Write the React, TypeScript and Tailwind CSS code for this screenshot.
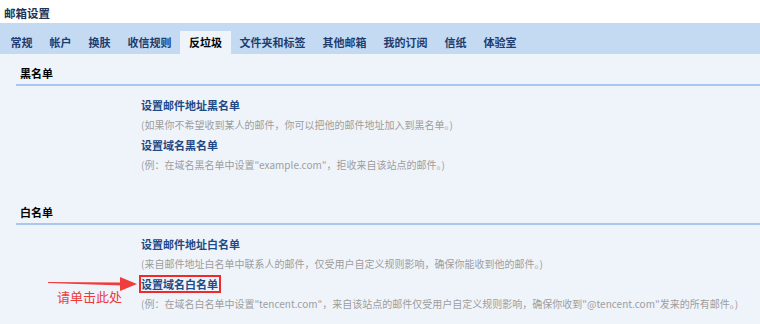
const font = { fontFamily: '"Microsoft YaHei", "Noto Sans CJK SC", "Liberation Sans", sans-serif' };

const tabs = ["常规", "帐户", "换肤", "收信规则", "反垃圾", "文件夹和标签", "其他邮箱", "我的订阅", "信纸", "体验室"];

type Item = { title: string; desc: string; marked?: boolean };

const blackList: Item[] = [
  { title: "设置邮件地址黑名单", desc: "(如果你不希望收到某人的邮件，你可以把他的邮件地址加入到黑名单。)" },
  { title: "设置域名黑名单", desc: "(例：在域名黑名单中设置\"example.com\"，拒收来自该站点的邮件。)" },
];

const whiteList: Item[] = [
  { title: "设置邮件地址白名单", desc: "(来自邮件地址白名单中联系人的邮件，仅受用户自定义规则影响，确保你能收到他的邮件。)" },
  {
    title: "设置域名白名单",
    desc: "(例：在域名白名单中设置\"tencent.com\"，来自该站点的邮件仅受用户自定义规则影响，确保你收到\"@tencent.com\"发来的所有邮件。)",
    marked: true,
  },
];

function Section({ name, items, className }: { name: string; items: Item[]; className: string }) {
  return (
    <section className={className}>
      <div className="ml-4">
        <h2 className="h-[19px] pl-1 text-[11px] font-bold leading-[16px] text-black">{name}</h2>
        <div className="h-[2px] bg-[#a9c8ee]" />
      </div>
      <div className="pl-[141px] pt-[9px]">
        {items.map((item) => (
          <div key={item.title}>
            <div className="relative h-[20px] text-[11px] font-bold leading-[20px] text-[#1e4a86]">
              <span className="relative">
                {item.title}
                {item.marked && (
                  <span className="absolute -left-[2px] -right-[3px] -top-[1px] -bottom-[1px] border-2 border-[#f02a2a]" />
                )}
              </span>
            </div>
            <div className="h-[20px] whitespace-nowrap text-[10px] leading-[20px] text-[#9d9d9d]">{item.desc}</div>
          </div>
        ))}
      </div>
    </section>
  );
}

export default function App() {
  return (
    <div className="relative h-[324px] w-[760px] overflow-hidden bg-[#eff4fb]" style={font}>
      {/* header */}
      <div className="h-[23px] bg-white pl-1 text-[11.5px] font-bold leading-[26px] text-[#1f3556]">邮箱设置</div>

      {/* tabs */}
      <div className="flex h-[31px] items-end bg-[#c4daf3] pl-[2px]">
        {tabs.map((t) => (
          <div
            key={t}
            className={
              t === "反垃圾"
                ? "flex h-[23px] items-center bg-[#eff4fb] px-[9px] text-[11px] font-bold text-black"
                : "flex h-[23px] items-center px-[8.5px] text-[11px] font-bold text-[#1e3d6e]"
            }
          >
            {t}
          </div>
        ))}
      </div>

      <Section name="黑名单" items={blackList} className="pt-[11px]" />
      <Section name="白名单" items={whiteList} className="mt-[29px]" />

      {/* annotation */}
      <svg className="absolute left-[46px] top-[275px]" width="94" height="18" viewBox="0 0 94 18">
        <polygon points="2,7 76,7.5 76,10.5 2,8" fill="#f03c3c" />
        <polygon points="74,2 91,9 74,16" fill="#f03c3c" />
      </svg>
      <div className="absolute left-[57px] top-[288px] text-[13px] leading-[18px] text-[#ec3a3a]">请单击此处</div>
    </div>
  );
}
